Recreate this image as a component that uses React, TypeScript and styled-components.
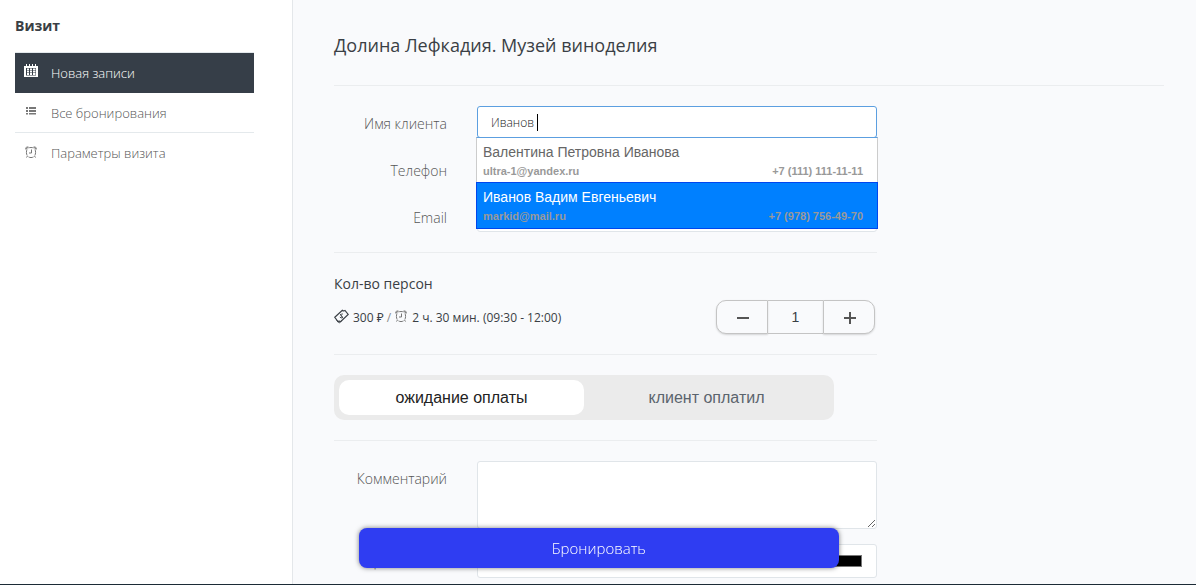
import React, { useState } from "react";
import styled, { createGlobalStyle, css } from "styled-components";

const sans = `"Open Sans", "Noto Sans", sans-serif`;
const arial = `"Liberation Sans", Arial, sans-serif`;

const GlobalStyle = createGlobalStyle`
  *, *::before, *::after { box-sizing: border-box; }
  body {
    margin: 0;
    font-family: ${sans};
    font-size: 14px;
    color: #3a3f45;
    background: #f9fafc;
  }
`;

const Page = styled.div`
  display: flex;
  min-height: 100vh;
  border-bottom: 1px solid #1c2b36;
`;

const Sidebar = styled.aside`
  flex: none;
  width: 293px;
  padding: 16px 38px 0 15px;
  background: #fff;
  border-right: 1px solid #e4e7ea;
`;

const SidebarTitle = styled.h2`
  margin: 0 0 16px;
  font-size: 14px;
  line-height: 20px;
  font-weight: 700;
`;

const Menu = styled.nav`
  display: flex;
  flex-direction: column;
  border-top: 1px solid #e4e9ec;
`;

const MenuLink = styled.a<{ $active?: boolean }>`
  display: flex;
  align-items: center;
  gap: 12px;
  height: 40px;
  padding: 0 8px;
  font-size: 13px;
  font-weight: 300;
  color: #555;
  text-decoration: none;
  border-bottom: 1px solid #e4e9ec;

  &:last-child { border-bottom: 0; }

  svg { flex: none; margin-bottom: 3px; }

  ${(p) =>
    p.$active &&
    css`
      color: #fff;
      background: #363e48;
      border-color: #363e48;
    `}
`;

const Main = styled.main`
  flex: 1;
  min-width: 0;
  padding: 30px 32px 6px 41px;
`;

const Title = styled.h1`
  margin: 0;
  font-size: 18px;
  line-height: 30px;
  font-weight: 400;
  padding-bottom: 25px;
  border-bottom: 1px solid #ebedef;
`;

const Form = styled.form`
  max-width: 543px;
  padding-top: 20px;
`;

const Fields = styled.div`
  display: flex;
  flex-direction: column;
  gap: 15px;
`;

const Row = styled.div`
  display: grid;
  grid-template-columns: 113px 1fr;
  column-gap: 30px;
`;

const Label = styled.label`
  padding-top: 8px;
  font-size: 14px;
  line-height: 20px;
  font-weight: 300;
  text-align: right;
  color: #555;
`;

const Control = styled.div`
  position: relative;
  display: flex;
`;

const field = css`
  width: 100%;
  padding: 6px 13px;
  font-family: ${sans};
  font-size: 12px;
  font-weight: 300;
  color: #222;
  background: #fff;
  border: 1px solid #e0e5e9;
  border-radius: 3px;
  outline: none;
`;

const TextInput = styled.input`
  ${field}
  height: 32px;
  caret-color: transparent;
  &:focus { border-color: #5c9fe0; }
`;

const Caret = styled.span`
  position: absolute;
  top: 8px;
  left: 60px;
  width: 1px;
  height: 17px;
  background: #000;
`;

const TextArea = styled.textarea`
  ${field}
  height: 68px;
  resize: both;
`;

const ColorInput = styled.input`
  ${field}
  height: 34px;
  padding: 6px 12px;
`;

const Suggestions = styled.ul`
  position: absolute;
  z-index: 2;
  top: 31px;
  left: -1px;
  right: -1px;
  margin: 0;
  padding: 0;
  list-style: none;
  font-family: ${arial};
`;

const Suggestion = styled.li<{ $selected?: boolean }>`
  position: relative;
  height: 47px;
  padding: 4px 14px 0 6px;
  color: ${(p) => (p.$selected ? "#fff" : "#666")};
  background: ${(p) => (p.$selected ? "#0080ff" : "#fff")};
  border: 1px solid ${(p) => (p.$selected ? "#0046ee" : "#ccc")};
  border-top-color: ${(p) => (p.$selected ? "#0046ee" : "#5c9fe0")};
  & + & { margin-top: -2px; }
`;

const PersonName = styled.div`
  font-size: 14px;
  line-height: 20px;
`;

const PersonContacts = styled.div`
  display: flex;
  justify-content: space-between;
  font-size: 11px;
  line-height: 18px;
  font-weight: 700;
  color: #999;
`;

const Divider = styled.hr`
  height: 1px;
  margin: 20px 0;
  border: 0;
  background: #ebedef;
`;

const Persons = styled.section`
  display: flex;
  justify-content: space-between;
  align-items: flex-end;
  padding-right: 2px;
`;

const PersonsTitle = styled.h3`
  margin: 0 0 13px;
  font-size: 14px;
  line-height: 22px;
  font-weight: 400;
`;

const Summary = styled.p`
  display: flex;
  align-items: center;
  gap: 4px;
  margin: 0;
  padding-bottom: 6px;
  font-size: 12px;
  line-height: 20px;

  svg { flex: none; margin-bottom: 3px; }
`;

const Slash = styled.span`
  color: #888;
`;

const Stepper = styled.div`
  display: flex;
  margin-top: 27px;
  height: 34px;
`;

const StepButton = styled.button`
  display: flex;
  align-items: center;
  justify-content: center;
  width: 52px;
  padding: 0 0 0 2px;
  color: #555;
  background: #f9fafc;
  border: 1px solid #c4c4c4;
  box-shadow: 0 1px 2px rgba(0, 0, 0, 0.15);
  &:first-child { border-radius: 10px 0 0 10px; }
  &:last-child { border-radius: 0 10px 10px 0; }
`;

const StepValue = styled.output`
  width: 55px;
  font-family: ${arial};
  font-size: 14px;
  line-height: 32px;
  text-align: center;
  border: solid #c4c4c4;
  border-width: 1px 0;
`;

const Toggle = styled.div`
  display: flex;
  max-width: 500px;
  padding: 5px;
  background: #ebebeb;
  border-radius: 10px;
`;

const ToggleOption = styled.label<{ $active: boolean }>`
  flex: 1;
  font-family: ${arial};
  font-size: 16px;
  line-height: 35px;
  text-align: center;
  color: ${(p) => (p.$active ? "#222" : "#5b646d")};
  background: ${(p) => (p.$active ? "#fff" : "transparent")};
  border-radius: 10px;
  cursor: pointer;

  input {
    appearance: none;
    width: 0;
    margin: 0;
  }
`;

const BookButton = styled.button`
  position: fixed;
  z-index: 3;
  left: 30%;
  bottom: 17px;
  width: 480px;
  height: 40px;
  font-family: ${sans};
  font-size: 15px;
  font-weight: 300;
  color: #fff;
  background: #2f3df2;
  border: 0;
  border-radius: 8px;
  box-shadow: 0 0 5px rgba(0, 0, 0, 0.5);
`;

const CalendarIcon = () => (
  <svg width="16" height="16" viewBox="0 0 16 16" fill="currentColor" aria-hidden="true">
    <path
      fillRule="evenodd"
      d="M1 3h2V1h1v2h2V1h1v2h2V1h1v2h2V1h1v2h2v11H1zM3 5v7.500h10V5z"
    />
    <path d="M4 5.500h2v2H4zM7 5.500h2v2H7zM10 5.500h2.500v2H10zM4 8h2v1.500H4zM7 8h2v1.500H7zM10 8h2.500v1.500H10zM4 10h2v2H4zM7 10h2v2H7zM10 10h2.500v2H10z" />
  </svg>
);

const ListIcon = () => (
  <svg width="16" height="16" viewBox="0 0 16 16" fill="#777" aria-hidden="true">
    <path d="M3 4h2v2H3zM6 4h7v2H6zM3 7h2v2H3zM6 7h7v2H6zM3 10h2v1.500H3zM6 10h7v1.500H6z" />
  </svg>
);

const ClockIcon = ({ size }: { size: number }) => (
  <svg width={size} height={size} viewBox={size === 16 ? "0 0 16 16" : "2 2 13 13"} fill="none" stroke="#777" aria-hidden="true">
    <path d="M5.500 3.900C6.500 3.400 9.500 3.400 10.500 3.900M12 5.500c.8 1.500.8 4.500-.2 6M10.500 12.900c-1.500.9-3.500.9-5 0M4.200 11.500c-1-1.500-1-4.500-.2-6" />
    <path d="M8.500 5.500v3.500H6" />
    <path d="M2.800 5.300C2.400 3.300 3.800 2.500 5.300 3.200zM13.200 5.300C13.600 3.300 12.200 2.500 10.700 3.200zM4.500 12l-1 1.500M11.500 12l1 1.500" />
  </svg>
);

const MoneyIcon = () => (
  <svg width="15" height="15" viewBox="0 0 15 15" fill="none" stroke="currentColor" aria-hidden="true">
    <path d="M.8 8.300 8.300 1.200c1 .9 1.900.8 2.700.3l3.200 4-7.600 7.200c-.9-.8-1.800-.9-2.700-.2z" strokeWidth="1.200" />
    <path d="M2.500 11.500l2.800 2.300 2.500-2.300" />
    <path d="M9 5.200c-1.300-.8-2.700.4-1.700 1.500s1.500 2-.1 2.300L5.800 8M6.200 5l3 4.500" strokeWidth=".9" />
  </svg>
);

const MinusIcon = () => (
  <svg width="14" height="14" viewBox="0 0 14 14" stroke="currentColor" strokeWidth="2" aria-hidden="true">
    <path d="M1 8h12" />
  </svg>
);

const PlusIcon = () => (
  <svg width="14" height="14" viewBox="0 0 14 14" stroke="currentColor" strokeWidth="2" aria-hidden="true">
    <path d="M1 8h12M7 2v12" />
  </svg>
);

const clients = [
  { name: "Валентина Петровна Иванова", email: "ultra-1@yandex.ru", phone: "+7 (111) 111-11-11" },
  { name: "Иванов Вадим Евгеньевич", email: "markid@mail.ru", phone: "+7 (978) 756-49-70" },
];

export default function App() {
  const [name, setName] = useState("Иванов ");
  const [count, setCount] = useState(1);
  const [paid, setPaid] = useState(false);

  return (
    <>
      <GlobalStyle />
      <Page>
        <Sidebar>
          <SidebarTitle>Визит</SidebarTitle>
          <Menu>
            <MenuLink href="#new" $active><CalendarIcon />Новая записи</MenuLink>
            <MenuLink href="#all"><ListIcon />Все бронирования</MenuLink>
            <MenuLink href="#settings"><ClockIcon size={16} />Параметры визита</MenuLink>
          </Menu>
        </Sidebar>
        <Main>
          <Title>Долина Лефкадия. Музей виноделия</Title>
          <Form onSubmit={(e) => e.preventDefault()}>
            <Fields>
              <Row>
                <Label htmlFor="name">Имя клиента</Label>
                <Control>
                  <TextInput id="name" autoFocus autoComplete="off" value={name} onChange={(e) => setName(e.target.value)} />
                  <Caret />
                  <Suggestions role="listbox" aria-label="Имя клиента">
                    {clients.map((c, i) => (
                      <Suggestion key={c.email} role="option" aria-selected={i === 1} $selected={i === 1}>
                        <PersonName>{c.name}</PersonName>
                        <PersonContacts><span>{c.email}</span><span>{c.phone}</span></PersonContacts>
                      </Suggestion>
                    ))}
                  </Suggestions>
                </Control>
              </Row>
              <Row>
                <Label htmlFor="phone">Телефон</Label>
                <Control><TextInput id="phone" type="tel" /></Control>
              </Row>
              <Row>
                <Label htmlFor="email">Email</Label>
                <Control><TextInput id="email" type="email" /></Control>
              </Row>
            </Fields>
            <Divider />
            <Persons>
              <div>
                <PersonsTitle>Кол-во персон</PersonsTitle>
                <Summary>
                  <MoneyIcon /> <span>300 ₽ <Slash>/</Slash></span> <ClockIcon size={13} /> <span>2 ч. 30 мин. (09:30 - 12:00)</span>
                </Summary>
              </div>
              <Stepper>
                <StepButton type="button" aria-label="Меньше" onClick={() => setCount(Math.max(1, count - 1))}><MinusIcon /></StepButton>
                <StepValue>{count}</StepValue>
                <StepButton type="button" aria-label="Больше" onClick={() => setCount(count + 1)}><PlusIcon /></StepButton>
              </Stepper>
            </Persons>
            <Divider />
            <Toggle>
              <ToggleOption $active={!paid}>
                <input type="radio" name="payment" checked={!paid} onChange={() => setPaid(false)} />
                ожидание оплаты
              </ToggleOption>
              <ToggleOption $active={paid}>
                <input type="radio" name="payment" checked={paid} onChange={() => setPaid(true)} />
                клиент оплатил
              </ToggleOption>
            </Toggle>
            <Divider />
            <Fields>
              <Row>
                <Label htmlFor="comment">Комментарий</Label>
                <Control><TextArea id="comment" /></Control>
              </Row>
              <Row>
                <Label htmlFor="color">Цвет записи</Label>
                <Control><ColorInput id="color" type="color" defaultValue="#000000" /></Control>
              </Row>
            </Fields>
            <BookButton type="submit">Бронировать</BookButton>
          </Form>
        </Main>
      </Page>
    </>
  );
}
